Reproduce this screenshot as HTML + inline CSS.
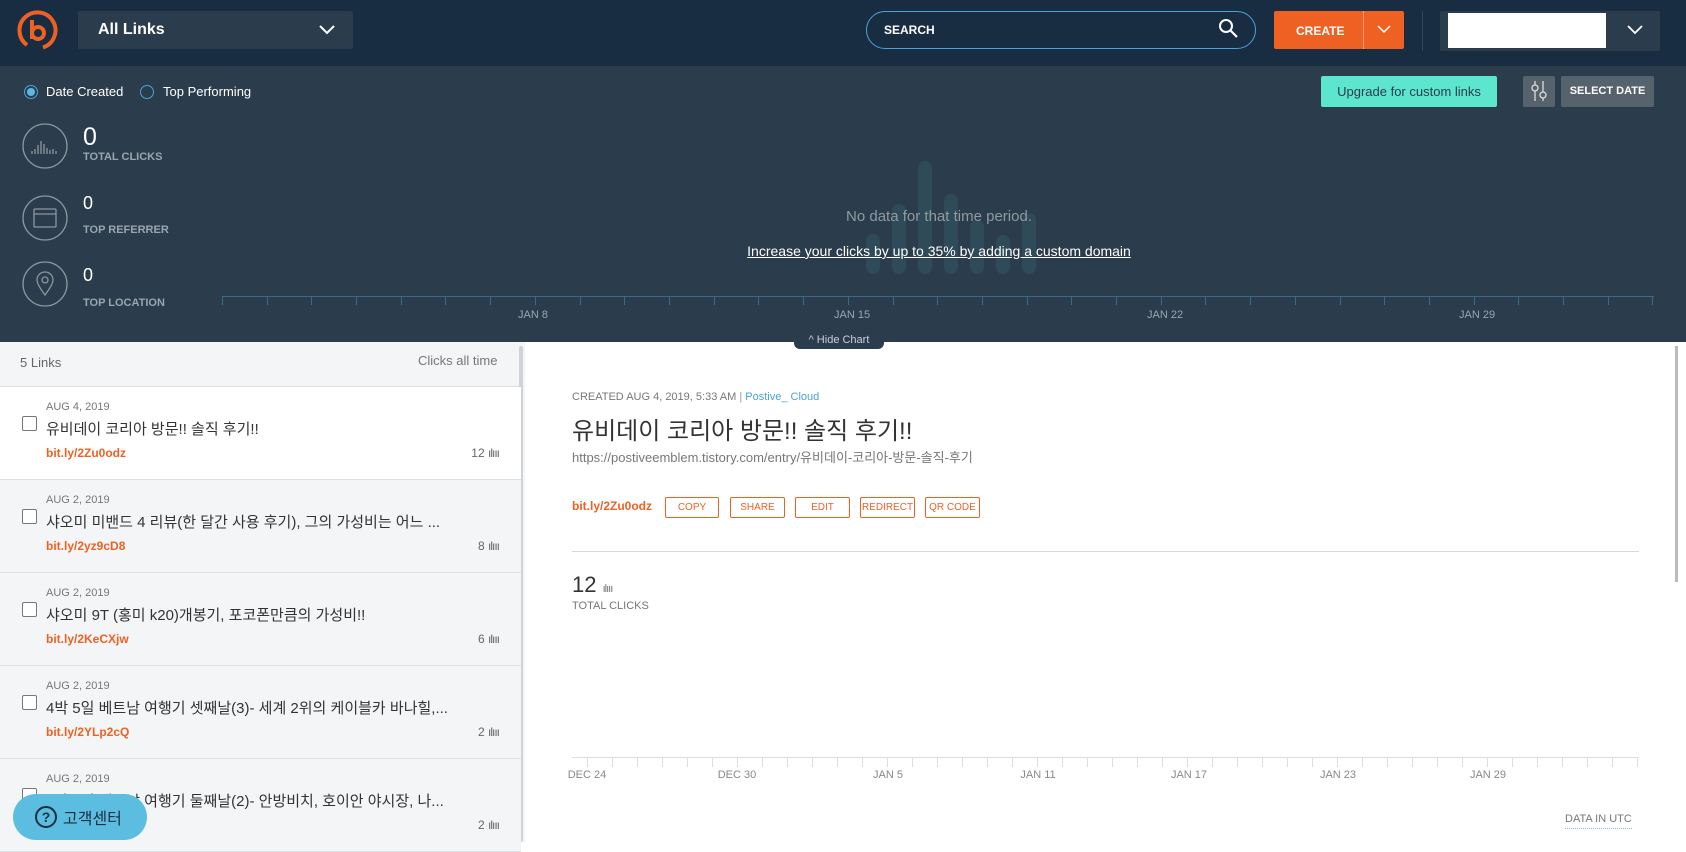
<!DOCTYPE html>
<html><head><meta charset="utf-8"><style>
*{box-sizing:border-box;margin:0;padding:0}
body{width:1686px;height:842px;overflow:hidden;font-family:"Liberation Sans","Noto Sans CJK KR",sans-serif;background:#fff;position:relative}
.a{position:absolute}
.hdr{left:0;top:0;width:1686px;height:66px;background:#192d42}
.chart{left:0;top:66px;width:1686px;height:276px;background:#2b3d4c}
.lbl{color:#9aa5ad;font-size:11px;font-weight:bold}
.tick{position:absolute;top:296px;width:1px;height:9px;background:#3b6a88}
.row{position:absolute;left:0;width:521px;height:93px;border-bottom:1px solid #dcdfe3;background:#f4f5f7}
.row .d{position:absolute;left:46px;top:14px;font-size:11px;color:#777}
.row .t{position:absolute;left:46px;top:31px;font-size:15px;color:#333;white-space:nowrap}
.row .l{position:absolute;left:46px;top:59px;font-size:12px;color:#ee6123;font-weight:bold}
.row .c{position:absolute;right:22px;top:59px;font-size:12px;color:#666}
.row .cb{position:absolute;left:22px;top:29px;width:15px;height:15px;border:1px solid #777;border-radius:2px;background:#fff}
.btn{position:absolute;top:497px;height:21px;border:1px solid #ee6123;border-radius:2px;color:#ee6123;font-size:10px;text-align:center;line-height:19px}
.xl{position:absolute;top:769px;font-size:11px;color:#888;transform:translateX(-50%)}
.bt{position:absolute;top:758px;width:1px;height:9px;background:#ddd}
.bar{position:absolute;width:14px;border-radius:7px;background:#2f4b59;top:auto;bottom:568px}
</style></head><body>
<div class="a hdr"></div>
<svg class="a" style="left:17px;top:9px" width="42" height="42" viewBox="0 0 42 42"><path d="M10 36 A18 18 0 1 1 26 38.5" fill="none" stroke="#ee6123" stroke-width="4"/><path d="M15 11 V30 M15 24 a6 6 0 1 0 12 0 a6 6 0 1 0 -12 0" fill="none" stroke="#ee6123" stroke-width="4"/></svg>
<div class="a" style="left:78px;top:11px;width:275px;height:38px;background:#2b3d4c;border-radius:2px"></div>
<div class="a" style="left:98px;top:21px;color:#fff;font-size:16px;font-weight:bold">All Links</div>
<svg class="a" style="left:318px;top:24px" width="18" height="12"><path d="M2 2 L9 9 L16 2" fill="none" stroke="#fff" stroke-width="2"/></svg>
<div class="a" style="left:866px;top:11px;width:390px;height:38px;border:1px solid #4aa3d6;border-radius:19px"></div>
<div class="a" style="left:884px;top:23px;color:#fff;font-size:12px;font-weight:bold">SEARCH</div>
<svg class="a" style="left:1218px;top:18px" width="22" height="22"><circle cx="8" cy="8" r="6" fill="none" stroke="#fff" stroke-width="2"/><path d="M12.5 12.5 L19 19" stroke="#fff" stroke-width="2.2"/></svg>
<div class="a" style="left:1274px;top:11px;width:130px;height:38px;background:#ee6123;border-radius:2px"></div>
<div class="a" style="left:1363px;top:11px;width:1px;height:38px;background:#f7a17a"></div>
<div class="a" style="left:1296px;top:24px;color:#fff;font-size:12px;font-weight:bold">CREATE</div>
<svg class="a" style="left:1376px;top:24px" width="16" height="12"><path d="M2 2 L8 8 L14 2" fill="none" stroke="#fff" stroke-width="1.5"/></svg>
<div class="a" style="left:1422px;top:11px;width:1px;height:40px;background:#2e4a62"></div>
<div class="a" style="left:1440px;top:11px;width:220px;height:40px;background:#2b3d4c;border-radius:2px"></div>
<div class="a" style="left:1448px;top:13px;width:158px;height:35px;background:#fff"></div>
<svg class="a" style="left:1626px;top:24px" width="18" height="12"><path d="M2 2 L9 9 L16 2" fill="none" stroke="#fff" stroke-width="1.8"/></svg>

<div class="a chart"></div>
<div class="a" style="left:24px;top:85px;width:14px;height:14px;border:1px solid #4aa3d6;border-radius:50%"></div>
<div class="a" style="left:27px;top:88px;width:8px;height:8px;background:#5bb8e6;border-radius:50%"></div>
<div class="a" style="left:46px;top:84px;color:#fff;font-size:13px">Date Created</div>
<div class="a" style="left:140px;top:85px;width:14px;height:14px;border:1px solid #4aa3d6;border-radius:50%"></div>
<div class="a" style="left:163px;top:84px;color:#fff;font-size:13px">Top Performing</div>
<div class="a" style="left:1321px;top:76px;width:176px;height:31px;background:#5ce5cf;border-radius:2px;color:#2b3d4c;font-size:13px;text-align:center;line-height:31px">Upgrade for custom links</div>
<div class="a" style="left:1523px;top:76px;width:32px;height:31px;background:#56636d;border-radius:2px"></div>
<svg class="a" style="left:1529px;top:79px" width="20" height="26"><path d="M6 2V22M14 2V22" stroke="#ddd" stroke-width="1.3"/><circle cx="6" cy="9" r="3" fill="#56636d" stroke="#ddd" stroke-width="1.3"/><circle cx="14" cy="16" r="3" fill="#56636d" stroke="#ddd" stroke-width="1.3"/></svg>
<div class="a" style="left:1561px;top:76px;width:93px;height:31px;background:#56636d;border-radius:2px;color:#fff;font-size:11px;font-weight:bold;text-align:center;line-height:31px">SELECT DATE</div>

<svg class="a" style="left:22px;top:123px" width="48" height="186" fill="none" stroke="#8c969d" stroke-width="1.3">
<circle cx="23" cy="23" r="22"/><circle cx="23" cy="95" r="22"/><circle cx="23" cy="161" r="22"/>
<path d="M10 28v3M13 26v5M16 22v9M19 18v13M22 21v10M25 25v6M28 27v4M31 26v5M34 28v3"/>
<rect x="12" y="86" width="22" height="18" rx="1"/><path d="M12 91h22"/>
<path d="M23 172 C17 164 15 160 15 157 a8 8 0 0 1 16 0 c0 3 -2 7 -8 15z"/><circle cx="23" cy="157" r="3"/>
</svg>
<div class="a" style="left:83px;top:123px;color:#fff;font-size:25px">0</div>
<div class="a lbl" style="left:83px;top:151px">TOTAL CLICKS</div>
<div class="a" style="left:83px;top:193px;color:#fff;font-size:18px">0</div>
<div class="a lbl" style="left:83px;top:224px">TOP REFERRER</div>
<div class="a" style="left:83px;top:265px;color:#fff;font-size:18px">0</div>
<div class="a lbl" style="left:83px;top:297px">TOP LOCATION</div>

<div class="bar" style="left:866px;height:40px"></div>
<div class="bar" style="left:892px;height:70px"></div>
<div class="bar" style="left:918px;height:113px"></div>
<div class="bar" style="left:944px;height:80px"></div>
<div class="bar" style="left:970px;height:54px"></div>
<div class="bar" style="left:996px;height:39px"></div>
<div class="bar" style="left:1022px;height:61px"></div>
<div class="a" style="left:739px;top:208px;width:400px;text-align:center;color:#8f9aa1;font-size:15px">No data for that time period.</div>
<div class="a" style="left:639px;top:243px;width:600px;text-align:center;color:#fff;font-size:14px;text-decoration:underline">Increase your clicks by up to 35% by adding a custom domain</div>

<div class="a" style="left:222px;top:296px;width:1432px;height:1px;background:#3b6a88"></div>
<div id="ticks"></div>
<div class="a" style="left:518px;top:309px;color:#9aa5ad;font-size:11px">JAN 8</div>
<div class="a" style="left:834px;top:309px;color:#9aa5ad;font-size:11px">JAN 15</div>
<div class="a" style="left:1147px;top:309px;color:#9aa5ad;font-size:11px">JAN 22</div>
<div class="a" style="left:1459px;top:309px;color:#9aa5ad;font-size:11px">JAN 29</div>
<div class="a" style="left:794px;top:332px;width:90px;height:17px;background:#2b3d4c;border-radius:0 0 6px 6px;color:#ccd;font-size:11px;text-align:center;line-height:16px">^ Hide Chart</div>

<div class="a" style="left:0;top:342px;width:525px;height:500px;background:#f4f5f7"></div>
<div class="a" style="left:20px;top:355px;color:#666;font-size:13px">5 Links</div>
<div class="a" style="left:418px;top:353px;color:#777;font-size:13px">Clicks all time</div>
<div class="a" style="left:0;top:386px;width:521px;height:1px;background:#dcdfe3"></div>
<div class="a" style="left:519px;top:346px;width:4px;height:496px;background:#cfd2d6;border-radius:2px"></div>

<div class="row" style="top:387px;background:#fff"><div class="cb"></div><div class="d">AUG 4, 2019</div><div class="t">유비데이 코리아 방문!! 솔직 후기!!</div><div class="l">bit.ly/2Zu0odz</div><div class="c">12 <span style="letter-spacing:-1px">ılııı</span></div></div>
<div class="row" style="top:480px"><div class="cb"></div><div class="d">AUG 2, 2019</div><div class="t">샤오미 미밴드 4 리뷰(한 달간 사용 후기), 그의 가성비는 어느 ...</div><div class="l">bit.ly/2yz9cD8</div><div class="c">8 <span style="letter-spacing:-1px">ılııı</span></div></div>
<div class="row" style="top:573px"><div class="cb"></div><div class="d">AUG 2, 2019</div><div class="t">샤오미 9T (홍미 k20)개봉기, 포코폰만큼의 가성비!!</div><div class="l">bit.ly/2KeCXjw</div><div class="c">6 <span style="letter-spacing:-1px">ılııı</span></div></div>
<div class="row" style="top:666px"><div class="cb"></div><div class="d">AUG 2, 2019</div><div class="t">4박 5일 베트남 여행기 셋째날(3)- 세계 2위의 케이블카 바나힐,...</div><div class="l">bit.ly/2YLp2cQ</div><div class="c">2 <span style="letter-spacing:-1px">ılııı</span></div></div>
<div class="row" style="top:759px"><div class="cb"></div><div class="d">AUG 2, 2019</div><div class="t">4박 5일 베트남 여행기 둘째날(2)- 안방비치, 호이안 야시장, 나...</div><div class="l"></div><div class="c">2 <span style="letter-spacing:-1px">ılııı</span></div></div>
<div class="a" style="left:13px;top:794px;width:134px;height:46px;background:#5bbde0;border-radius:23px"></div>
<div class="a" style="left:35px;top:806px;width:22px;height:22px;border:2px solid #1b2e42;border-radius:50%;color:#1b2e42;font-size:14px;font-weight:bold;text-align:center;line-height:18px">?</div>
<div class="a" style="left:63px;top:805px;color:#1b2e42;font-size:16px">고객센터</div>

<div class="a" style="left:1675px;top:346px;width:3px;height:236px;background:#bbb"></div>
<div class="a" style="left:572px;top:391px;font-size:11px;color:#777">CREATED AUG 4, 2019, 5:33 AM <span style="color:#999">|</span> <span style="color:#4aa3d6">Postive_ Cloud</span></div>
<div class="a" style="left:572px;top:411px;font-size:24px;color:#333">유비데이 코리아 방문!! 솔직 후기!!</div>
<div class="a" style="left:572px;top:447px;font-size:13px;color:#777">https://postiveemblem.tistory.com/entry/유비데이-코리아-방문-솔직-후기</div>
<div class="a" style="left:572px;top:499px;font-size:12px;color:#ee6123;font-weight:bold">bit.ly/2Zu0odz</div>
<div class="btn" style="left:665px;width:54px">COPY</div>
<div class="btn" style="left:730px;width:55px">SHARE</div>
<div class="btn" style="left:795px;width:55px">EDIT</div>
<div class="btn" style="left:860px;width:55px">REDIRECT</div>
<div class="btn" style="left:925px;width:55px">QR CODE</div>
<div class="a" style="left:572px;top:551px;width:1067px;height:1px;background:#d8d8d8"></div>
<div class="a" style="left:572px;top:572px;font-size:22px;color:#333">12 <span style="font-size:11px;color:#777;letter-spacing:-1px">ılııı</span></div>
<div class="a" style="left:572px;top:600px;font-size:11px;color:#777">TOTAL CLICKS</div>
<div class="a" style="left:572px;top:757px;width:1067px;height:1px;background:#ddd"></div>
<div id="bt"></div>
<div class="xl" style="left:587px">DEC 24</div>
<div class="xl" style="left:737px">DEC 30</div>
<div class="xl" style="left:888px">JAN 5</div>
<div class="xl" style="left:1038px">JAN 11</div>
<div class="xl" style="left:1189px">JAN 17</div>
<div class="xl" style="left:1338px">JAN 23</div>
<div class="xl" style="left:1488px">JAN 29</div>
<div class="a" style="left:1565px;top:813px;font-size:11px;color:#777;border-bottom:1px dotted #7bbde0;padding-bottom:3px">DATA IN UTC</div>
<script>
var h='';for(var x=222;x<1654;x+=44.7){h+='<div class="tick" style="left:'+Math.round(x)+'px"></div>'}document.getElementById('ticks').innerHTML=h;
var b='';for(var x=587;x<1639;x+=25){b+='<div class="bt" style="left:'+Math.round(x)+'px"></div>'}document.getElementById('bt').innerHTML=b;
</script>
</body></html>
